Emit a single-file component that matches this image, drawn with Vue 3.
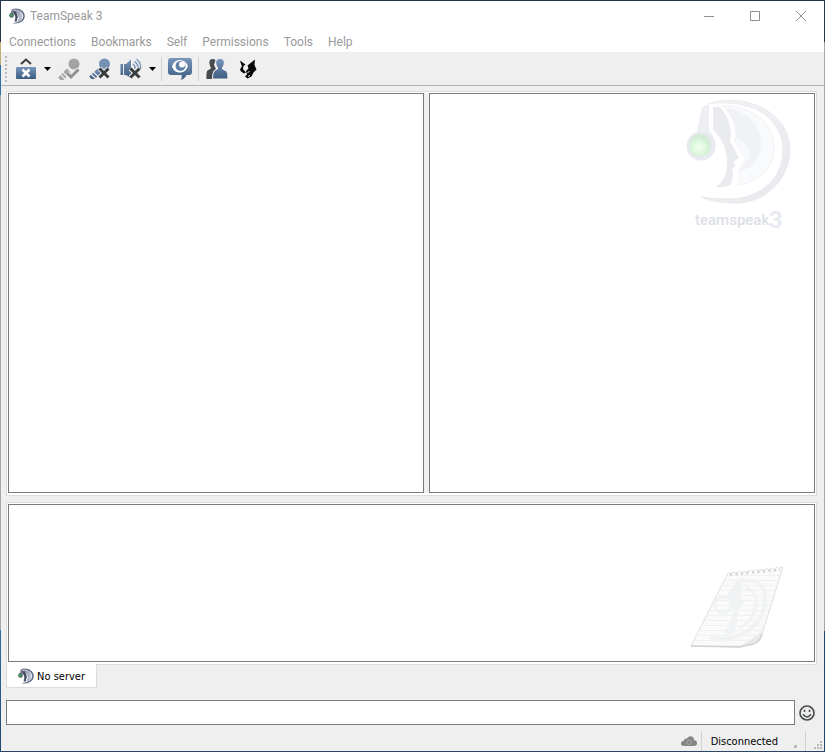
<script setup>
import { ref } from 'vue'

const menus = ['Connections', 'Bookmarks', 'Self', 'Permissions', 'Tools', 'Help']
const message = ref('')
</script>

<template>
  <svg class="defs" aria-hidden="true">
    <defs>
      <linearGradient id="blue" x1="0" y1="0" x2="0" y2="1">
        <stop offset="0" stop-color="#7896bb" />
        <stop offset="1" stop-color="#3c5c80" />
      </linearGradient>
      <linearGradient id="face" x1="0" y1="0" x2="1" y2="0">
        <stop offset="0" stop-color="#8087a0" />
        <stop offset="1" stop-color="#cdd3e1" />
      </linearGradient>
      <symbol id="ts" viewBox="0 0 16 16">
        <path d="M2.500 1.200C10 -1 16 3 15.800 8.300C15.600 13.500 10 16.500 3.500 15.200C10 14.500 14 12 14.200 8.300C14.400 4 9.500 1.300 5 1.700z" fill="#666e85" />
        <path d="M6 2C11 2 13.800 5 13.600 8.300C13.400 11.500 11.500 13.300 8.500 13.800L8.700 12L10 10L8.500 6z" fill="url(#face)" />
        <path d="M2.600 1.500L5 1.500V5L3.800 6L1.800 6z" fill="#7a8094" />
        <path d="M5 2.500L7 3.500L8 6L9 9.500L8.200 10.500L7.700 13.500L5.500 13.500C7 10 6.500 7 4.500 5.500z" fill="#454b60" />
        <circle cx="2.500" cy="7.400" r="2.300" fill="#4a6360" />
        <circle cx="2.100" cy="7.300" r="1.300" fill="#3fa35f" />
      </symbol>
      <symbol id="cross" viewBox="0 0 12 12">
        <path d="M1.500 1.500L10.500 10.500M10.500 1.500L1.500 10.500" stroke="#efefef" stroke-width="5" />
        <path d="M1.500 1.500L10.500 10.500M10.500 1.500L1.500 10.500" stroke="#383d40" stroke-width="3" />
      </symbol>
    </defs>
  </svg>

  <div class="window">
    <header class="titlebar">
      <svg class="app-icon"><use href="#ts" /></svg>
      <h1>TeamSpeak 3</h1>
      <button aria-label="Minimize"><svg viewBox="0 0 10 10"><path d="M0 5.500H10" /></svg></button>
      <button aria-label="Maximize"><svg viewBox="0 0 10 10"><path d="M.5 .5H9.500V9.500H.5z" /></svg></button>
      <button aria-label="Close"><svg viewBox="0 0 10 10"><path d="M0 0L10 10M10 0L0 10" /></svg></button>
    </header>

    <nav class="menubar">
      <button v-for="m in menus" :key="m">{{ m }}</button>
    </nav>

    <div class="toolbar" role="toolbar">
      <span class="grip"></span>
      <button aria-label="Connection">
        <svg viewBox="0 0 24 24">
          <path d="M7 7L12 2.500L17 7" fill="none" stroke="#383d40" stroke-width="2" />
          <rect x="2" y="10" width="20" height="12" rx="1" fill="url(#blue)" />
          <path d="M8.500 12.500L15.500 19.500M15.500 12.500L8.500 19.500" stroke="#fff" stroke-width="2.600" />
        </svg>
      </button>
      <button class="drop" aria-label="Connection options"><svg viewBox="0 0 7 4"><path d="M0 0H7L3.500 4z" /></svg></button>
      <button aria-label="Toggle away">
        <svg viewBox="0 0 24 24">
          <circle cx="17" cy="7" r="5.500" fill="#a3a3a3" />
          <path d="M1.500 20L10 11.500L14 15.500L6.500 23H3.500L1.500 21z" fill="#a3a3a3" />
          <path d="M5 14.500L11 20.500M3 17L8 22" stroke="#efefef" stroke-width="1.200" />
          <path d="M10 16L14 20L21.500 12.500" fill="none" stroke="#efefef" stroke-width="5" />
          <path d="M10 16L14 20L21.500 12.500" fill="none" stroke="#919191" stroke-width="3" />
        </svg>
      </button>
      <button aria-label="Mute microphone">
        <svg viewBox="0 0 24 24">
          <circle cx="16.500" cy="7" r="5.500" fill="#7491b4" />
          <path d="M1.500 19L10 11.500L14 15.500L6.500 22H3.500L1.500 20z" fill="url(#blue)" />
          <path d="M5 14.500L11 20.500M3 17L8 22" stroke="#efefef" stroke-width="1.200" />
          <use href="#cross" x="10" y="10" width="12" height="12" />
        </svg>
      </button>
      <button aria-label="Mute speakers">
        <svg viewBox="0 0 24 24">
          <path d="M1.500 7H4V18H1.500zM5 7H7L12 2.500V21L7 18H5z" fill="url(#blue)" />
          <path d="M14 7Q16.500 9 16 12M15.500 4.500Q19.500 7 19 12M17.500 2Q22.500 6 21.500 12" fill="none" stroke="#7f9bbd" stroke-width="1.500" />
          <use href="#cross" x="10" y="10" width="12" height="12" />
        </svg>
      </button>
      <button class="drop" aria-label="Speaker options"><svg viewBox="0 0 7 4"><path d="M0 0H7L3.500 4z" /></svg></button>
      <span class="divider"></span>
      <button aria-label="Subscribe to channels">
        <svg viewBox="0 0 24 24">
          <path d="M3 1H21Q24 1 24 4V15Q24 18 21 18H18.500Q17.500 21 13 23Q14.500 20 13.500 18H3Q0 18 0 15V4Q0 1 3 1z" fill="url(#blue)" />
          <path d="M4 9.500C5.500 5 8.500 3 12 3S18.500 5 20 9C18.500 13.500 15.500 15.500 12 15.500S5.500 14 4 9.500z" fill="#fff" />
          <circle cx="12.500" cy="9" r="5" fill="#6080a8" />
          <circle cx="14" cy="7.500" r="3" fill="#fff" />
        </svg>
      </button>
      <span class="divider"></span>
      <button aria-label="Contacts">
        <svg viewBox="0 0 24 24">
          <path d="M5 3Q8 1 10.500 3L9 8L11 12L8.500 14L7 22H1.500Q1 15 2.500 13.500L6 11.500L5.500 10Q3.500 6 5 3z" fill="#444a4d" />
          <path d="M15 1.500C18 1.500 19.500 3.500 19.300 6Q19 9 17.500 10.500V12L21.500 14Q23 15 23 22H7.500Q7.500 15 9.500 13.500L12.500 12V10.500Q11 9 10.700 6C10.500 3.500 12 1.500 15 1.500z" fill="url(#blue)" stroke="#efefef" />
        </svg>
      </button>
      <button aria-label="Fox overlay">
        <svg viewBox="0 0 24 24">
          <path d="M4 3.500L9.500 7.500L7.500 9L7 12L10 15.500L8 16.500L5 14.500L4 12.500L6 9L5 7zM11.500 8.500L19 2.500L18.500 8L20.500 12.500L17.500 15.500L15.500 19.500L11.500 21.500L9 19.500L11 17.500L10 14L12.500 11.500z" fill="#080808" />
          <path d="M11.500 15.500L13.500 14.500M12 19.500L14 18.500" stroke="#efefef" />
        </svg>
      </button>
    </div>

    <main>
      <section class="group upper">
        <div class="panel tree"></div>
        <div class="splitter"></div>
        <div class="panel info">
          <svg class="watermark" viewBox="0 0 108 138" role="img" aria-label="TeamSpeak 3">
            <defs>
              <linearGradient id="ring" x1="0" y1="0" x2="1" y2="1">
                <stop offset="0" stop-color="#f4f5f7" /><stop offset="1" stop-color="#e6e8ec" />
              </linearGradient>
              <radialGradient id="lamp" cx=".45" cy=".6">
                <stop offset="0" stop-color="#f4fff3" /><stop offset=".6" stop-color="#dcf8db" /><stop offset="1" stop-color="#d3ecd6" />
              </radialGradient>
            </defs>
            <path d="M24 6C34 2 48 1 62 4C92 11 107 32 106 54C104 86 76 108 46 105Q28 104 17 99Q30 101 46 101C74 101 98 82 99 54C100 27 78 7 46 5Q33 4 24 6z" fill="url(#ring)" stroke="#e7e9ed" stroke-width=".8" />
            <path d="M37 8C68 7 90 25 90 49C90 73 72 85 52 87L53 77L56 70L62 61L51 45L51 36Q48 19 37 8z" fill="#f9fafc" stroke="#eceef2" stroke-width=".8" />
            <path d="M40 10C62 12 78 27 77 47C76 62 68 71 55 73L62 61L51 45L51 36Q48 20 40 10z" fill="#f1f2f6" />
            <path d="M52 41Q66 46 65 57Q64 65 57 70L62 61L51 45z" fill="#f8f9fc" />
            <path d="M29 9H36Q46 20 47 35L46 43L55 60L50 63L51 68L48 71L49 77L47 86Q42 90 32 89Q42 82 43 68Q44 45 29 32z" fill="#e9ebef" />
            <path d="M38 9Q50 22 50 37L49 44L59 61L53 66L52 87" fill="none" stroke="#fff" stroke-width="3" />
            <path d="M18 9L25 6V33Q31 38 32 48L12 38z" fill="#eeeff3" />
            <path d="M27 7V32" stroke="#fff" stroke-width="3" />
            <circle cx="17" cy="48" r="14.500" fill="#e7eaef" />
            <circle cx="16" cy="47" r="11" fill="url(#lamp)" />
            <text class="brand" x="11" y="127">teamspeak</text>
            <text class="three" x="85" y="130">3</text>
          </svg>
        </div>
      </section>

      <section class="group lower">
        <div class="panel chat">
          <svg class="notepad" viewBox="0 0 94 84" aria-hidden="true">
            <defs>
              <linearGradient id="paper" x1="0" y1="0" x2="1" y2="1">
                <stop offset="0" stop-color="#fbfbfb" /><stop offset=".75" stop-color="#fafafa" /><stop offset="1" stop-color="#e2e2e2" />
              </linearGradient>
              <pattern id="rules" width="8" height="5" patternUnits="userSpaceOnUse"><path d="M0 4.500H8" stroke="#edf2f5" /></pattern>
              <clipPath id="sheet"><path d="M38 7L93 1L72 68Q70 76 63 78L50 81L1 80z" /></clipPath>
            </defs>
            <path d="M38 7L93 1L72 68Q70 76 63 78L50 81L1 80z" fill="url(#paper)" stroke="#dedede" />
            <g clip-path="url(#sheet)">
              <path d="M0 0H94V84H0z" fill="url(#rules)" />
              <g fill="none" stroke="#f0f2f3">
                <path d="M46 15Q76 10 75 34C74 60 48 78 20 71" stroke-width="4" />
                <path d="M56 22Q68 26 66 39Q62 56 50 62" stroke-width="3" />
                <circle cx="33" cy="39" r="8" stroke-width="3" />
              </g>
              <path d="M45 16L52 15L50 30L54 38L48 44L47 56L44 68L34 67Q44 52 43 41L36 32z" fill="#f0f2f3" />
              <path d="M50 80Q62 74 74 64L68 81z" fill="#e9e9e9" />
            </g>
            <path d="M1 80L50 81L63 78Q70 76 72 68" fill="none" stroke="#d2d2d2" stroke-width="1.500" />
            <path d="M40 8L90 3" stroke="#d2d2d2" stroke-width="4" stroke-dasharray="2 3.500" />
            <path d="M39 6L90 1" stroke="#fff" stroke-width="2" stroke-dasharray="3 2.500" />
          </svg>
        </div>
      </section>
      <div class="tabs" role="tablist">
        <button role="tab" aria-selected="true"><svg><use href="#ts" /></svg><span>No server</span></button>
      </div>
    </main>

    <form class="composer" @submit.prevent>
      <input v-model="message" type="text" aria-label="Message">
      <button type="button" aria-label="Emoticons">
        <svg viewBox="0 0 16 16" fill="none" stroke="#4b4f52">
          <circle cx="8" cy="8" r="7" stroke-width="1.700" />
          <path d="M4 9.300Q8 14.500 12 9.300" stroke-width="1.500" />
          <path d="M5.500 4.800V7M10.500 4.800V7" stroke-width="1.600" />
        </svg>
      </button>
    </form>

    <footer class="status">
      <svg class="cloud" viewBox="0 0 16 10">
        <path d="M3 10Q0 10 0 7.500Q0 5 3 4.500Q3.500 2 6 2.500Q7.500 0 10 .3Q13 .8 13 4Q16 4.500 16 7.300Q16 10 13 10z" fill="#858585" />
        <circle cx="8" cy="6.300" r="2.200" fill="none" stroke="#a9a9a9" />
      </svg>
      <span class="divider"></span>
      <output>Disconnected</output>
      <span class="dot"></span>
      <span class="divider"></span>
      <svg class="resize" viewBox="0 0 8 8"><path d="M6 0h2v2h-2zM3 3h2v2h-2zM6 3h2v2h-2zM0 6h2v2h-2zM3 6h2v2h-2zM6 6h2v2h-2z" fill="#b9b9b9" /></svg>
    </footer>
  </div>
</template>

<style>
body { background: #efefef; }
</style>

<style scoped>
* { box-sizing: border-box; }
.defs { position: absolute; width: 0; height: 0; }
.window {
  display: flex;
  flex-direction: column;
  min-height: 100vh;
  padding: 1px;
  background:
    linear-gradient(#efefef, #efefef) content-box,
    linear-gradient(#27354e 42px, #a6a6a6 42px, #a6a6a6 631px, #1f4870 631px) right / 1px 100% no-repeat,
    linear-gradient(#27354e 42px, #c2ad72 42px, #c2ad72 65px, #2e70a5 65px, #2e70a5 95px, #a6a6a6 95px, #a6a6a6 630px, #2e70a5 630px, #24466b) left / 1px 100% no-repeat,
    linear-gradient(#27354e, #2b4564);
  font: 11px/16px "DejaVu Sans Condensed", "DejaVu Sans", sans-serif;
  color: #000;
}
button { display: flex; align-items: center; justify-content: center; padding: 0; border: 0; background: none; font: inherit; color: inherit; }
svg { display: block; flex: none; }
.titlebar { display: flex; align-items: center; height: 30px; padding-left: 8px; background: #fff; }
.app-icon { width: 16px; height: 16px; }
h1 { flex: 1; margin: 0 0 0 5px; font: 12px/16px Roboto, sans-serif; color: #999; }
.titlebar button { width: 46px; height: 28px; }
.titlebar button svg { width: 10px; height: 10px; overflow: visible; fill: none; stroke: #8f8f8f; }
.menubar { display: flex; gap: 15px; height: 22px; padding-left: 8px; background: #fff; border-bottom: 1px solid #ededed; font: 12px/20px Roboto, sans-serif; color: #999; }
.toolbar { display: flex; align-items: center; height: 33px; padding-left: 4px; border-bottom: 1px solid #b5b7b6; }
.toolbar button { width: 31px; height: 28px; }
.toolbar button svg { width: 24px; height: 24px; }
.toolbar .drop { width: 12px; }
.toolbar .drop svg { width: 7px; height: 4px; }
.grip { width: 2px; height: 26px; margin-right: 3px; background: repeating-linear-gradient(#bcbcbc 0 2px, transparent 2px 4px); }
.divider { width: 1px; height: 24px; margin: 0 2px 0 3px; background: #d2d2d2; }
main { flex: 1; display: flex; flex-direction: column; padding: 5px 7px 0 5px; }
.group { display: grid; border: 1px solid #dcdcdc; background: #fff; }
.upper { flex: 400 1 0; grid-template-columns: 416fr 5px 386fr; padding: 1px 1px 2px; }
.lower { flex: 158 1 0; margin-top: 6px; padding: 1px 1px 2px; }
.splitter { background: #efefef; }
.panel { border: 1px solid #7a7a7f; background: #fff; }
.info { display: flex; justify-content: flex-end; padding: 4px 22px 0 0; }
.watermark { width: 108px; height: 138px; }
.brand { font: 500 15px Roboto, sans-serif; fill: #dde0e8; }
.three { font: 500 24px Roboto, sans-serif; fill: #e6e9f2; }
.chat { display: flex; align-items: flex-end; justify-content: flex-end; padding: 0 30px 11px 0; }
.notepad { width: 94px; height: 84px; }
.tabs { display: flex; }
.tabs button { gap: 3px; width: 91px; height: 24px; margin-top: -1px; border: 1px solid #dcdcdc; border-top: 0; background: #fff; }
.tabs svg { width: 16px; height: 16px; }
.tabs span { padding-top: 2px; }
.composer { display: flex; align-items: center; gap: 4px; padding: 12px 9px 0 5px; }
.composer input { flex: 1; min-width: 0; height: 25px; padding: 0 4px; border: 1px solid #7a7a7a; border-radius: 0; background: #fff; font: inherit; outline: 0; }
.composer svg { width: 16px; height: 16px; }
.status { display: flex; align-items: center; justify-content: flex-end; height: 26px; padding: 6px 2px 0 0; }
.status .divider { height: 20px; margin: 0; }
.cloud { width: 16px; height: 10px; margin-right: 4px; }
.status output { margin: 0 16px 0 9px; padding-top: 1px; }
.dot { width: 3px; height: 3px; margin: 10px 8px 0 0; border-radius: 50%; background: #aaa; }
.resize { align-self: flex-end; width: 8px; height: 8px; margin: 0 0 2px 8px; }
</style>
